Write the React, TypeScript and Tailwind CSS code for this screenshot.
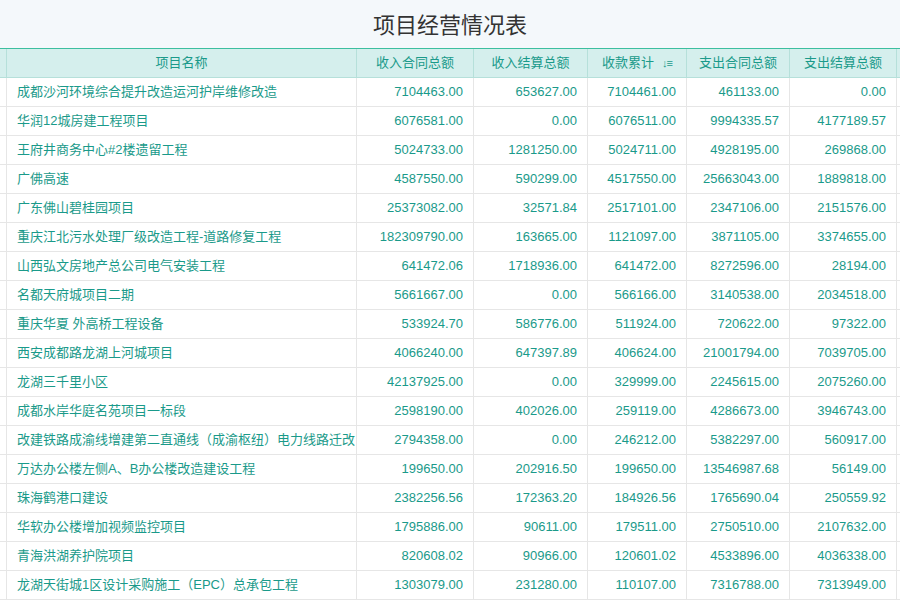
const rows: string[][] = [
["成都沙河环境综合提升改造运河护岸维修改造","7104463.00","653627.00","7104461.00","461133.00","0.00"],
["华润12城房建工程项目","6076581.00","0.00","6076511.00","9994335.57","4177189.57"],
["王府井商务中心#2楼遗留工程","5024733.00","1281250.00","5024711.00","4928195.00","269868.00"],
["广佛高速","4587550.00","590299.00","4517550.00","25663043.00","1889818.00"],
["广东佛山碧桂园项目","25373082.00","32571.84","2517101.00","2347106.00","2151576.00"],
["重庆江北污水处理厂级改造工程-道路修复工程","182309790.00","163665.00","1121097.00","3871105.00","3374655.00"],
["山西弘文房地产总公司电气安装工程","641472.06","1718936.00","641472.00","8272596.00","28194.00"],
["名都天府城项目二期","5661667.00","0.00","566166.00","3140538.00","2034518.00"],
["重庆华夏 外高桥工程设备","533924.70","586776.00","511924.00","720622.00","97322.00"],
["西安成都路龙湖上河城项目","4066240.00","647397.89","406624.00","21001794.00","7039705.00"],
["龙湖三千里小区","42137925.00","0.00","329999.00","2245615.00","2075260.00"],
["成都水岸华庭名苑项目一标段","2598190.00","402026.00","259119.00","4286673.00","3946743.00"],
["改建铁路成渝线增建第二直通线（成渝枢纽）电力线路迁改","2794358.00","0.00","246212.00","5382297.00","560917.00"],
["万达办公楼左侧A、B办公楼改造建设工程","199650.00","202916.50","199650.00","13546987.68","56149.00"],
["珠海鹤港口建设","2382256.56","172363.20","184926.56","1765690.04","250559.92"],
["华软办公楼增加视频监控项目","1795886.00","90611.00","179511.00","2750510.00","2107632.00"],
["青海洪湖养护院项目","820608.02","90966.00","120601.02","4533896.00","4036338.00"],
["龙湖天街城1区设计采购施工（EPC）总承包工程","1303079.00","231280.00","110107.00","7316788.00","7313949.00"],
];
const cols = "grid-cols-[7px_350px_117px_114px_99px_103px_107px_1fr]";
export default function App() {
  return (
    <div className="w-[900px] h-[600px] overflow-hidden bg-[#f4f8fb] text-[13px] text-[#1a9a8a]" style={{fontFamily:'"Liberation Sans","Noto Sans CJK SC",sans-serif'}}>
      <div className="h-[48px] flex items-center justify-center text-[22px] text-[#333] pt-[2px]">项目经营情况表</div>
      <div className={`grid ${cols} h-[30px] bg-[#d5efed] border-t border-[#3cbf9f] border-b border-b-[#b6e0da]`}>
        <div className="border-r border-[#b6e0da]"></div>
        <div className="flex items-center justify-center border-r border-[#b6e0da]">项目名称</div>
        <div className="flex items-center justify-center border-r border-[#b6e0da]">收入合同总额</div>
        <div className="flex items-center justify-center border-r border-[#b6e0da]">收入结算总额</div>
        <div className="flex items-center justify-center border-r border-[#b6e0da] gap-2">收款累计<span className="text-[11px] tracking-[-1px]">↓≡</span></div>
        <div className="flex items-center justify-center border-r border-[#b6e0da]">支出合同总额</div>
        <div className="flex items-center justify-center border-r border-[#b6e0da]">支出结算总额</div>
        <div></div>
      </div>
      {rows.map((r, i) => (
        <div key={i} className={`grid ${cols} h-[29px] bg-white border-b border-[#e6e6e6]`}>
          <div className="border-r border-[#e6e6e6]"></div>
          <div className="flex items-center px-[10px] border-r border-[#e6e6e6] whitespace-nowrap overflow-hidden">{r[0]}</div>
          {r.slice(1).map((v, j) => (
            <div key={j} className="flex items-center justify-end pr-[10px] border-r border-[#e6e6e6]">{v}</div>
          ))}
          <div></div>
        </div>
      ))}
    </div>
  );
}
